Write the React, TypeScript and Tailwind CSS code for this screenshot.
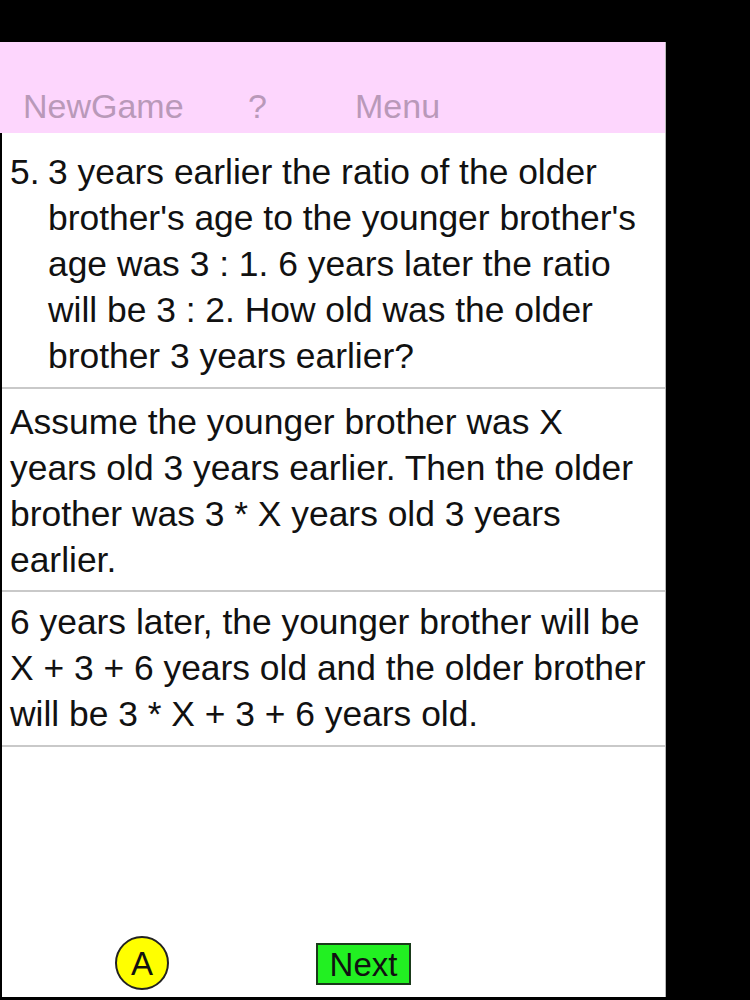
const font = { fontFamily: '"Liberation Sans", Arial, sans-serif' };

const steps = [
  {
    pad: 'pt-[10px] pb-[7px]',
    text: 'Assume the younger brother was X years old 3 years earlier. Then the older brother was 3 * X years old 3 years earlier.',
  },
  {
    pad: 'pt-[7px] pb-[8px]',
    text: '6 years later, the younger brother will be X + 3 + 6 years old and the older brother will be 3 * X + 3 + 6 years old.',
  },
];

export default function App() {
  return (
    <div className="h-[1000px] w-[750px] overflow-hidden bg-black pt-[42px]" style={font}>
      <div className="flex h-[955px] w-[666px] flex-col border-r border-[#b8b8b8] bg-white">
        {/* top bar */}
        <div className="flex h-[91px] shrink-0 items-end bg-[#fdd6fd] pb-[10px] text-[34px] leading-[34px] font-light text-[#b999b9]">
          <span className="ml-[23px] w-[225px]">NewGame</span>
          <span className="w-[107px]">?</span>
          <span>Menu</span>
        </div>

        <div className="flex flex-1 flex-col border-l-2 border-black text-[35.4px] leading-[46px] text-[#111]">
          <div className="flex border-b-2 border-[#c9c9c9] pl-[8px] pr-[15px] pt-[16px] pb-[8px]">
            <span className="w-[38px] shrink-0">5.</span>
            <p>
              3 years earlier the ratio of the older brother's age to the younger brother's age was 3 : 1. 6 years
              later the ratio will be 3 : 2. How old was the older brother 3 years earlier?
            </p>
          </div>

          {steps.map((s, i) => (
            <p key={i} className={`border-b-2 border-[#c9c9c9] pl-[8px] pr-[15px] ${s.pad}`}>
              {s.text}
            </p>
          ))}

          <div className="flex-1" />

          {/* answer / next */}
          <div className="flex h-[65px] shrink-0 items-start">
            <button className="ml-[113px] mt-[4px] flex h-[54px] w-[54px] items-center justify-center rounded-full border-2 border-[#222] bg-[#ffff00] text-[33px] leading-none text-[#111]">
              A
            </button>
            <button className="ml-[147px] mt-[11px] flex h-[42px] w-[95px] items-center justify-center border-2 border-[#1a3a1a] bg-[#22f022] text-[33px] leading-none text-[#111]">
              Next
            </button>
          </div>
        </div>
      </div>
    </div>
  );
}
